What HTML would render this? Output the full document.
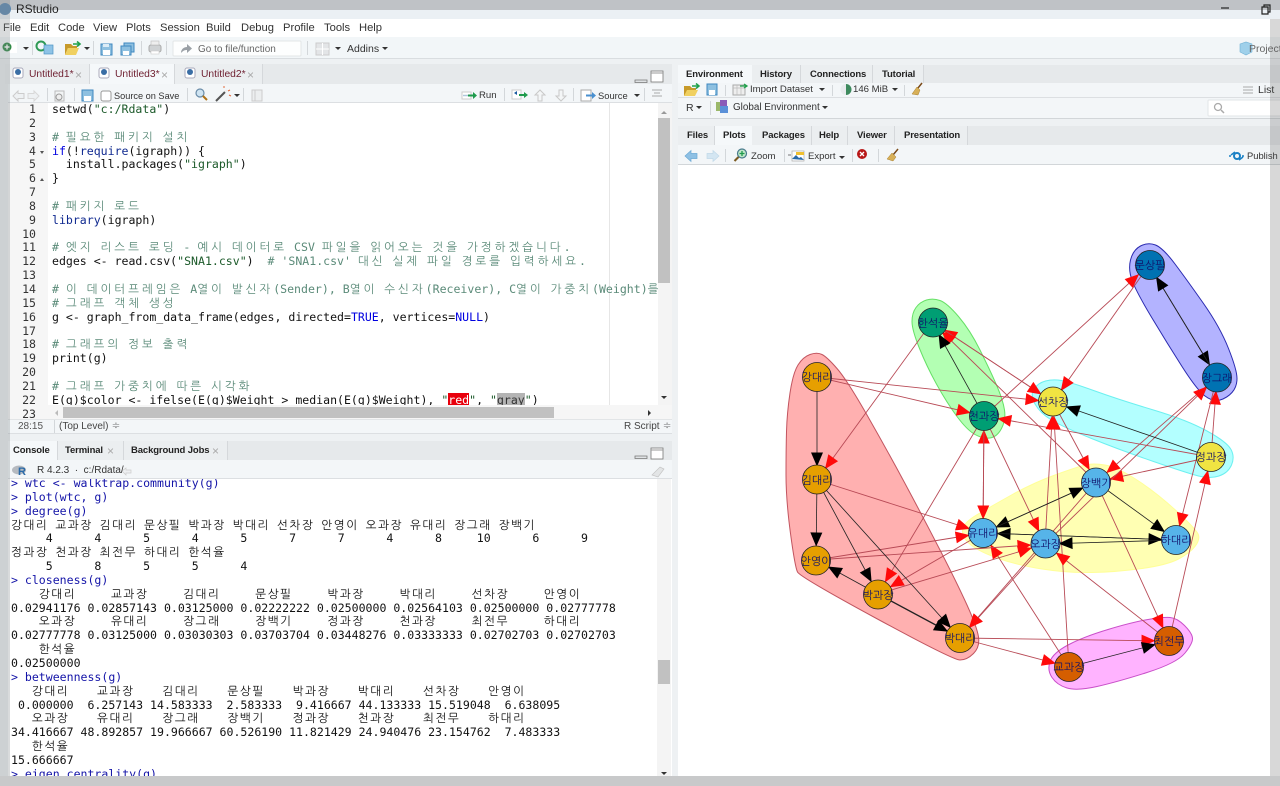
<!DOCTYPE html>
<html lang="ko"><head><meta charset="utf-8"><title>RStudio</title>
<style>
html,body{margin:0;padding:0;width:1280px;height:786px;overflow:hidden;background:#eef1f3}
#w{position:absolute;left:0;top:0;width:1280px;height:786px;overflow:hidden;filter:blur(.3px);font-family:"Liberation Sans","NanumGothic",sans-serif;font-size:10.5px;color:#333}
.a{position:absolute}
.t{position:absolute;white-space:nowrap;line-height:14px}
.b{font-weight:bold;color:#222;font-size:9.5px;letter-spacing:-.12px}
.n{font-size:9.6px}
.x{color:#aaa;font-size:12px}
.s{position:absolute;width:1px;background:#d3d7da}
.d{position:absolute;width:0;height:0;border-left:3px solid transparent;border-right:3px solid transparent;border-top:3px solid #333}
.c{position:absolute;font-family:"DejaVu Sans Mono","Liberation Mono",monospace;font-size:11.55px;color:#111}
.c div{height:13.85px;line-height:13.85px;white-space:pre}
.c i{font-style:normal;font-family:"NanumGothic","Noto Sans CJK KR",sans-serif}
.src i{letter-spacing:2.95px}
.con i{letter-spacing:1.6px}
.m{color:#5a8a78}.k{color:#0000e0}.f{color:#102a90}.q{color:#1c5a2a}
.con .p{color:#1414a8}
svg{position:absolute;overflow:visible}
svg text{font-family:"NanumGothic","Noto Sans CJK KR",sans-serif;font-size:11px;fill:#10106a;text-anchor:middle}
</style></head><body><div id="w">

<!-- window chrome -->
<div class="a" style="left:0;top:0;width:1280px;height:10px;background:#bfc2c6"></div>
<div class="a" style="left:0;top:10px;width:1280px;height:9px;background:#ebf0f4"></div>
<div class="a" style="left:0;top:19px;width:1280px;height:18px;background:#fff"></div>
<div class="a" style="left:0;top:37px;width:1280px;height:21px;background:#f2f6f8;border-bottom:1px solid #d9dde0"></div>
<div class="t" style="left:16px;top:2px;font-size:12px;color:#222">RStudio</div>
<div class="t" style="left:3px;top:21px;font-size:11.2px">File</div>
<div class="t" style="left:30px;top:21px;font-size:11.2px">Edit</div>
<div class="t" style="left:58px;top:21px;font-size:11.2px">Code</div>
<div class="t" style="left:93px;top:21px;font-size:11.2px">View</div>
<div class="t" style="left:126px;top:21px;font-size:11.2px">Plots</div>
<div class="t" style="left:160px;top:21px;font-size:11.2px">Session</div>
<div class="t" style="left:206px;top:21px;font-size:11.2px">Build</div>
<div class="t" style="left:241px;top:21px;font-size:11.2px">Debug</div>
<div class="t" style="left:283px;top:21px;font-size:11.2px">Profile</div>
<div class="t" style="left:324px;top:21px;font-size:11.2px">Tools</div>
<div class="t" style="left:359px;top:21px;font-size:11.2px">Help</div>

<!-- main toolbar -->
<svg style="left:0;top:0" width="1280" height="60">
 <circle cx="5" cy="9" r="6" fill="#5b87b0"/>
 <path d="M1221 8h8" stroke="#222" stroke-width="1.2"/>
 <path d="M1262 7h6v7h-6zM1264 7V5h6v7h-2" fill="none" stroke="#222" stroke-width="1.2"/>
 <rect x="9" y="42" width="8" height="11" fill="#fff"/>
 <circle cx="7" cy="47" r="4.5" fill="#2f8a45"/><path d="M4.5 47h5M7 44.5v5" stroke="#fff" stroke-width="1.4"/>
 <circle cx="41" cy="46" r="4.5" fill="none" stroke="#2f9a55" stroke-width="2"/>
 <rect x="44" y="45" width="9" height="9" fill="#8ec3e6" stroke="#4d94c4" stroke-width=".7"/>
 <path d="M65 44h6l2 2h4v2H68l-3 7z" fill="#c79a2a"/><path d="M65 55l3-7h11l-3 7z" fill="#f0d060"/>
 <path d="M73 44h6M77 41.5l3 2.5-3 2.5" stroke="#1fa04a" stroke-width="1.6" fill="none"/>
 <path d="M101 44h11v11h-11z" fill="#8ec0e0" stroke="#3f88c0"/><rect x="103" y="50" width="7" height="5" fill="#fff"/><rect x="103" y="44" width="6" height="3" fill="#dcecf6"/>
 <path d="M124 43h10v9h-10z" fill="#8ec0e0" stroke="#3f88c0"/><path d="M121 46h10v9h-10z" fill="#8ec0e0" stroke="#3f88c0"/><rect x="123" y="51" width="6" height="4" fill="#fff"/>
 <rect x="149" y="45" width="12" height="7" rx="2" fill="#cfd2d4" stroke="#aaa"/><rect x="151" y="41" width="8" height="4" fill="#eee" stroke="#bbb" stroke-width=".6"/><rect x="151" y="51" width="8" height="3" fill="#fff" stroke="#ccc" stroke-width=".6"/>
 <rect x="173" y="41" width="128" height="15" fill="#fdfefe" stroke="#e2e5e7" rx="1"/>
 <path d="M181 53c0-4 3-6 6-6v-3l5 4.5-5 4.5v-3c-3 0-4 1-6 3z" fill="#9aa0a6"/>
 <path d="M316 43h13v12h-13z" fill="#e3e5e7" stroke="#ccc"/><path d="M316 49h13M322.5 43v12" stroke="#fff"/>
 <path d="M1240 44l6-2 6 2v8l-6 3-6-3z" fill="#9fd0ea" stroke="#70b0d4" stroke-width=".6"/>
</svg>
<div class="d" style="left:23px;top:47px"></div><div class="s" style="left:32px;top:41px;height:14px"></div>
<div class="d" style="left:84px;top:47px"></div><div class="s" style="left:93px;top:41px;height:14px"></div>
<div class="s" style="left:141px;top:41px;height:14px"></div><div class="s" style="left:166px;top:41px;height:14px"></div>
<div class="s" style="left:307px;top:41px;height:14px"></div><div class="d" style="left:335px;top:47px"></div>
<div class="t" style="left:198px;top:43px;color:#666;font-size:10px">Go to file/function</div>
<div class="t" style="left:347px;top:42px;font-size:10.5px">Addins</div><div class="d" style="left:382px;top:47px"></div>
<div class="t" style="left:1249px;top:42px;color:#666;font-size:10.5px">Project:</div>

<!-- source pane -->
<div class="a" style="left:8px;top:64px;width:664px;height:20px;background:#e6e9eb"></div>
<div class="a" style="left:8px;top:84px;width:664px;height:19px;background:#f3f6f8;border-bottom:1px solid #dcdfe2;box-sizing:border-box"></div>
<div class="a" style="left:5px;top:64px;width:85px;height:20px;background:#ebeef0;border-right:1px solid #d5d8db;box-sizing:border-box"></div>
<div class="a" style="left:90px;top:64px;width:85px;height:20px;background:#f5f8fa;border-right:1px solid #d5d8db;box-sizing:border-box"></div>
<div class="a" style="left:175px;top:64px;width:88px;height:20px;background:#ebeef0;border-right:1px solid #d5d8db;box-sizing:border-box"></div>
<svg style="left:0;top:60px" width="280" height="30">
 <rect x="13" y="8" width="10" height="10" rx="2" fill="#fff" stroke="#aab"/><circle cx="18" cy="12" r="3" fill="#3a6ea5"/>
 <rect x="99" y="8" width="10" height="10" rx="2" fill="#fff" stroke="#aab"/><circle cx="104" cy="12" r="3" fill="#3a6ea5"/>
 <rect x="185" y="8" width="10" height="10" rx="2" fill="#fff" stroke="#aab"/><circle cx="190" cy="12" r="3" fill="#3a6ea5"/>
</svg>
<div class="t" style="left:29px;top:68px;color:#6e1f30;font-size:10.3px">Untitled1*</div><div class="t x" style="left:75px;top:68px">×</div>
<div class="t" style="left:115px;top:68px;color:#6e1f30;font-size:10.3px">Untitled3*</div><div class="t x" style="left:161px;top:68px">×</div>
<div class="t" style="left:201px;top:68px;color:#6e1f30;font-size:10.3px">Untitled2*</div><div class="t x" style="left:247px;top:68px">×</div>
<svg style="left:0;top:60px" width="680" height="45">
 <path d="M635 20h12v2.5h-12z" fill="#dfe2e4" stroke="#777" stroke-width=".8"/><rect x="651" y="11" width="12" height="11" fill="#fff" stroke="#777" stroke-width=".8"/><path d="M651 13h12" stroke="#999"/>
 <path d="M13 36l5-5v2.5h6v5h-6v2.5z" fill="#eef1f3" stroke="#ccc"/><path d="M39 36l-5-5v2.5h-6v5h6v2.5z" fill="#eef1f3" stroke="#d8d8d8"/>
 <rect x="55" y="31" width="9" height="10" fill="#f2f4f5" stroke="#bbb"/><circle cx="59" cy="37" r="3" fill="#eee" stroke="#999"/>
 <path d="M82 30h11v11h-11z" fill="#8ec0e0" stroke="#3f88c0"/><rect x="84" y="36" width="7" height="5" fill="#fff"/>
 <rect x="101" y="31" width="10" height="10" rx="2" fill="#fff" stroke="#999"/>
 <circle cx="200" cy="33" r="4" fill="#cfe4f2" stroke="#6a8ca8" stroke-width="1.2"/><path d="M203 36l4 4" stroke="#b0741a" stroke-width="2"/>
 <path d="M216 41l9-9" stroke="#555" stroke-width="2"/><path d="M225 32l2-2" stroke="#eee" stroke-width="2"/><path d="M228 31l2-1M224 28v-2M229 35l2 1" stroke="#e36a3a"/>
 <rect x="252" y="30" width="10" height="11" fill="#eceeef" stroke="#ccc"/><path d="M255 30v11" stroke="#ccc"/>
 <rect x="462" y="32" width="9" height="7" fill="#fff" stroke="#ccc"/><path d="M463 35.5h11" stroke="#b0c8dc" stroke-width="1.5"/><path d="M468 35.5h6" stroke="#1e9a4c" stroke-width="2"/><path d="M473 32l4 3.5-4 3.5z" fill="#1e9a4c"/>
 <rect x="512" y="30" width="9" height="9" fill="#fff" stroke="#ccc"/><path d="M514 33l3-2v4z" fill="#1a5aa0"/><path d="M519 35h6" stroke="#1e9a4c" stroke-width="2"/><path d="M524 32l4 3-4 3z" fill="#1e9a4c"/>
 <path d="M540 30l5 5h-3v6h-4v-6h-3z" fill="#f4f6f7" stroke="#c8c8c8"/><path d="M561 41l5-5h-3v-6h-4v6h-3z" fill="#f4f6f7" stroke="#c8c8c8"/>
 <rect x="581" y="30" width="10" height="11" fill="#fff" stroke="#aaa"/><path d="M586 35.5h7" stroke="#4a90d0" stroke-width="2"/><path d="M592 32l4 3.5-4 3.5z" fill="#4a90d0"/>
 <path d="M652 30h10M654 33h6M652 36h10" stroke="#aaa"/>
</svg>
<div class="s" style="left:47px;top:88px;height:13px"></div><div class="s" style="left:74px;top:88px;height:13px"></div><div class="s" style="left:187px;top:88px;height:13px"></div><div class="s" style="left:243px;top:88px;height:13px"></div>
<div class="s" style="left:504px;top:88px;height:13px"></div><div class="s" style="left:573px;top:88px;height:13px"></div><div class="s" style="left:644px;top:88px;height:13px"></div>
<div class="t" style="left:114px;top:88.5px;font-size:9.2px">Source on Save</div>
<div class="d" style="left:234px;top:94px"></div>
<div class="t n" style="left:479px;top:88.5px">Run</div>
<div class="t n" style="left:598px;top:88.5px;font-size:9.4px">Source</div><div class="d" style="left:634px;top:94px"></div>

<!-- editor -->
<div class="a" style="left:8px;top:103px;width:664px;height:316px;background:#fff"></div>
<div class="a" style="left:8px;top:103px;width:40px;height:316px;background:#f6f6f6"></div>
<div class="a" style="left:609px;top:103px;width:1px;height:302px;background:#e6e6e6"></div>
<div class="a" style="left:658px;top:103px;width:14px;height:302px;background:#f4f4f4"></div>
<div class="a" style="left:658px;top:118px;width:12px;height:165px;background:#c1c1c1"></div>
<div class="a" style="left:48px;top:405px;width:624px;height:14px;background:#f6f6f6"></div>
<div class="a" style="left:63px;top:407px;width:491px;height:11px;background:#c1c1c1"></div>
<div class="a" style="left:8px;top:405px;width:40px;height:14px;background:#f6f6f6"></div>
<div class="a" style="left:661px;top:111px;width:0;height:0;border-left:3px solid transparent;border-right:3px solid transparent;border-bottom:3px solid #999"></div>
<div class="a" style="left:661px;top:396px;width:0;height:0;border-left:3px solid transparent;border-right:3px solid transparent;border-top:3px solid #333"></div>
<div class="a" style="left:55px;top:410px;width:0;height:0;border-top:3px solid transparent;border-bottom:3px solid transparent;border-right:3px solid #bbb"></div>
<div class="a" style="left:648px;top:410px;width:0;height:0;border-top:3px solid transparent;border-bottom:3px solid transparent;border-left:3px solid #333"></div>
<div class="c" style="left:8px;top:103px;width:28px;text-align:right;color:#333;height:317px;overflow:hidden"><div>1</div><div>2</div><div>3</div><div>4</div><div>5</div><div>6</div><div>7</div><div>8</div><div>9</div><div>10</div><div>11</div><div>12</div><div>13</div><div>14</div><div>15</div><div>16</div><div>17</div><div>18</div><div>19</div><div>20</div><div>21</div><div>22</div><div>23</div></div>
<div class="a" style="left:40px;top:151px;width:0;height:0;border-left:2.5px solid transparent;border-right:2.5px solid transparent;border-top:3px solid #555"></div>
<div class="a" style="left:40px;top:178px;width:0;height:0;border-left:2.5px solid transparent;border-right:2.5px solid transparent;border-bottom:3px solid #555"></div>
<div class="c src" style="left:52px;top:103px;width:606px;height:302px;overflow:hidden">
<div>setwd(<span class="q">"c:/Rdata"</span>)</div>
<div></div>
<div class="m"># <i>필요한</i> <i>패키지</i> <i>설치</i></div>
<div><span class="k">if</span>(!<span class="f">require</span>(igraph)) {</div>
<div>  install.packages(<span class="q">"igraph"</span>)</div>
<div>}</div>
<div></div>
<div class="m"># <i>패키지</i> <i>로드</i></div>
<div><span class="f">library</span>(igraph)</div>
<div></div>
<div class="m"># <i>엣지</i> <i>리스트</i> <i>로딩</i> - <i>예시</i> <i>데이터로</i> CSV <i>파일을</i> <i>읽어오는</i> <i>것을</i> <i>가정하겠습니다</i>.</div>
<div>edges &lt;- read.csv(<span class="q">"SNA1.csv"</span>)  <span class="m"># 'SNA1.csv' <i>대신</i> <i>실제</i> <i>파일</i> <i>경로를</i> <i>입력하세요</i>.</span></div>
<div></div>
<div class="m"># <i>이</i> <i>데이터프레임은</i> A<i>열이</i> <i>발신자</i>(Sender), B<i>열이</i> <i>수신자</i>(Receiver), C<i>열이</i> <i>가중치</i>(Weight)<i>를</i></div>
<div class="m"># <i>그래프</i> <i>객체</i> <i>생성</i></div>
<div>g &lt;- graph_from_data_frame(edges, directed=<span class="k">TRUE</span>, vertices=<span class="k">NULL</span>)</div>
<div></div>
<div class="m"># <i>그래프의</i> <i>정보</i> <i>출력</i></div>
<div>print(g)</div>
<div></div>
<div class="m"># <i>그래프</i> <i>가중치에</i> <i>따른</i> <i>시각화</i></div>
<div>E(g)$color &lt;- ifelse(E(g)$Weight &gt; median(E(g)$Weight), <span class="q">"<span style="background:#e8000c;color:#fff">red</span>"</span>, <span class="q">"<span style="background:#b4b4b4;color:#333">gray</span>"</span>)</div>
</div>
<div class="a" style="left:8px;top:419px;width:664px;height:15px;background:#f3f6f8;border-top:1px solid #e2e5e7;border-bottom:1px solid #dcdfe2;box-sizing:border-box"></div>
<div class="s" style="left:54px;top:420px;height:13px"></div>
<div class="t" style="left:18px;top:420px;font-size:10px;color:#555">28:15</div>
<div class="t" style="left:59px;top:420px;font-size:10px;color:#444">(Top Level) ≑</div>
<div class="t" style="left:624px;top:420px;font-size:10px;color:#444">R Script ≑</div>

<!-- console -->
<div class="a" style="left:8px;top:441px;width:664px;height:19px;background:#e6e9eb"></div>
<div class="a" style="left:8px;top:441px;width:49px;height:19px;background:#f5f8fa"></div>
<div class="a" style="left:57px;top:441px;width:67px;height:19px;background:#ebeef0;border-left:1px solid #d5d8db;border-right:1px solid #d5d8db;box-sizing:border-box"></div>
<div class="a" style="left:124px;top:441px;width:104px;height:19px;background:#ebeef0;border-right:1px solid #d5d8db;box-sizing:border-box"></div>
<div class="t b" style="left:13px;top:444px">Console</div>
<div class="t b" style="left:65px;top:444px">Terminal</div><div class="t x" style="left:107px;top:444px">×</div>
<div class="t b" style="left:131px;top:444px">Background Jobs</div><div class="t x" style="left:212px;top:444px">×</div>
<div class="a" style="left:8px;top:460px;width:664px;height:19px;background:#f3f6f8;border-bottom:1px solid #dcdfe2;box-sizing:border-box"></div>
<svg style="left:0;top:440px" width="680" height="40">
 <path d="M635 16h12v2.5h-12z" fill="#dfe2e4" stroke="#777" stroke-width=".8"/><rect x="651" y="8" width="12" height="11" fill="#fff" stroke="#777" stroke-width=".8"/><path d="M651 10h12" stroke="#999"/>
 <ellipse cx="19" cy="30" rx="7" ry="4.5" fill="#b5bac0"/>
 <text x="22" y="35" style="font-family:'Liberation Sans';font-weight:bold;font-size:11px;fill:#2a6aa8">R</text>
 <path d="M122 31l4-3v2h5v3h-5v2z" fill="#eef0f2" stroke="#ccc" stroke-width=".7"/>
 <path d="M652 35l8-8 4 2-6 8z" fill="#e3e5e6" stroke="#c4c4c4" stroke-width=".7"/>
</svg>
<div class="t" style="left:37px;top:464px;font-size:10px;color:#333">R 4.2.3 &nbsp;· &nbsp;c:/Rdata/</div>
<div class="a" style="left:8px;top:479px;width:664px;height:297px;background:#fff"></div>
<div class="a" style="left:657px;top:479px;width:14px;height:297px;background:#f4f4f4"></div>
<div class="a" style="left:658px;top:660px;width:12px;height:24px;background:#c1c1c1"></div>
<div class="a" style="left:661px;top:772px;width:0;height:0;border-left:3px solid transparent;border-right:3px solid transparent;border-top:3px solid #333"></div>
<div class="a" style="left:8px;top:479px;width:648px;height:297px;overflow:hidden">
<div class="c con" style="left:3px;top:-2px">
<div class="p">&gt; wtc &lt;- walktrap.community(g)</div>
<div class="p">&gt; plot(wtc, g)</div>
<div class="p">&gt; degree(g)</div>
<div><i>강대리</i> <i>교과장</i> <i>김대리</i> <i>문상필</i> <i>박과장</i> <i>박대리</i> <i>선차장</i> <i>안영이</i> <i>오과장</i> <i>유대리</i> <i>장그래</i> <i>장백기</i></div>
<div>     4      4      5      4      5      7      7      4      8     10      6      9</div>
<div><i>정과장</i> <i>천과장</i> <i>최전무</i> <i>하대리</i> <i>한석율</i></div>
<div>     5      8      5      5      4</div>
<div class="p">&gt; closeness(g)</div>
<div>    <i>강대리</i>     <i>교과장</i>     <i>김대리</i>     <i>문상필</i>     <i>박과장</i>     <i>박대리</i>     <i>선차장</i>     <i>안영이</i></div>
<div>0.02941176 0.02857143 0.03125000 0.02222222 0.02500000 0.02564103 0.02500000 0.02777778</div>
<div>    <i>오과장</i>     <i>유대리</i>     <i>장그래</i>     <i>장백기</i>     <i>정과장</i>     <i>천과장</i>     <i>최전무</i>     <i>하대리</i></div>
<div>0.02777778 0.03125000 0.03030303 0.03703704 0.03448276 0.03333333 0.02702703 0.02702703</div>
<div>    <i>한석율</i></div>
<div>0.02500000</div>
<div class="p">&gt; betweenness(g)</div>
<div>   <i>강대리</i>    <i>교과장</i>    <i>김대리</i>    <i>문상필</i>    <i>박과장</i>    <i>박대리</i>    <i>선차장</i>    <i>안영이</i></div>
<div> 0.000000  6.257143 14.583333  2.583333  9.416667 44.133333 15.519048  6.638095</div>
<div>   <i>오과장</i>    <i>유대리</i>    <i>장그래</i>    <i>장백기</i>    <i>정과장</i>    <i>천과장</i>    <i>최전무</i>    <i>하대리</i></div>
<div>34.416667 48.892857 19.966667 60.526190 11.821429 24.940476 23.154762  7.483333</div>
<div>   <i>한석율</i></div>
<div>15.666667</div>
<div class="p">&gt; eigen_centrality(g)</div>
</div></div>

<!-- environment pane -->
<div class="a" style="left:678px;top:65px;width:602px;height:18px;background:#e6e9eb"></div>
<div class="a" style="left:678px;top:65px;width:74px;height:18px;background:#f5f8fa"></div>
<div class="a" style="left:752px;top:65px;width:49px;height:18px;background:#ebeef0;border-right:1px solid #d5d8db;box-sizing:border-box"></div>
<div class="a" style="left:801px;top:65px;width:72px;height:18px;background:#ebeef0;border-right:1px solid #d5d8db;box-sizing:border-box"></div>
<div class="a" style="left:873px;top:65px;width:51px;height:18px;background:#ebeef0;border-right:1px solid #d5d8db;box-sizing:border-box"></div>
<div class="t b" style="left:686px;top:68px">Environment</div><div class="t b" style="left:760px;top:68px">History</div><div class="t b" style="left:810px;top:68px">Connections</div><div class="t b" style="left:882px;top:68px">Tutorial</div>
<div class="a" style="left:678px;top:83px;width:602px;height:15px;background:#f3f6f8;border-bottom:1px solid #dcdfe2;box-sizing:border-box"></div>
<div class="a" style="left:678px;top:98px;width:602px;height:21px;background:#f3f6f8;border-bottom:1px solid #d2d6d9;box-sizing:border-box"></div>
<svg style="left:670px;top:80px" width="610" height="40">
 <path d="M14 6h6l2 2h4v2H18l-4 6z" fill="#c79a2a"/><path d="M14 16l3-6h11l-3 6z" fill="#f0d060"/><path d="M22 6h6M26 3.5l3 2.5-3 2.5" stroke="#1fa04a" stroke-width="1.5" fill="none"/>
 <path d="M37 4h10v11h-10z" fill="#8ec0e0" stroke="#3f88c0"/><rect x="39" y="10" width="6" height="5" fill="#fff"/>
 <rect x="63" y="5" width="12" height="10" fill="#eee" stroke="#aaa"/><path d="M63 8h12M67 5v10M71 5v10" stroke="#bbb" stroke-width=".7"/><path d="M70 6h6M74 4l3 2-3 2" stroke="#1fa04a" stroke-width="1.3" fill="none"/>
 <path d="M176 4a5.5 5.5 0 0 1 0 11z" fill="#3e8a5e"/><path d="M176 4a5.5 5.5 0 0 0 0 11z" fill="#e8ebed"/>
 <path d="M252 3l-4 5" stroke="#7a4a18" stroke-width="1.5"/><path d="M247 7l3 3-2 5-6-1z" fill="#d8b058" stroke="#a88030" stroke-width=".5"/>
 <rect x="46" y="22" width="9" height="9" fill="#9bb86a"/><rect x="50" y="20" width="7" height="8" fill="#8a5ab8"/><rect x="50" y="26" width="8" height="7" fill="#5a90d8"/>
 <path d="M573 7h10M573 10h10M573 13h10" stroke="#aaa"/>
 <rect x="538" y="20" width="80" height="16" rx="1" fill="#fff" stroke="#e2e5e7"/>
 <circle cx="548" cy="27" r="3.5" fill="none" stroke="#aaa" stroke-width="1.3"/><path d="M551 30l3 3" stroke="#aaa" stroke-width="1.5"/>
</svg>
<div class="s" style="left:725px;top:85px;height:11px"></div><div class="s" style="left:832px;top:85px;height:11px"></div><div class="s" style="left:904px;top:85px;height:11px"></div><div class="s" style="left:710px;top:101px;height:14px"></div>
<div class="t n" style="left:750px;top:82.5px">Import Dataset</div><div class="d" style="left:819px;top:88px"></div>
<div class="t n" style="left:853px;top:82.5px">146 MiB</div><div class="d" style="left:892px;top:88px"></div>
<div class="t" style="left:1258px;top:82.5px;font-size:10.5px">List</div>
<div class="t" style="left:686px;top:101px;font-size:10.5px">R</div><div class="d" style="left:696px;top:106px"></div>
<div class="t" style="left:733px;top:101px;font-size:9.9px">Global Environment</div><div class="d" style="left:822px;top:106px"></div>

<!-- plots pane -->
<div class="a" style="left:678px;top:126px;width:602px;height:19px;background:#e6e9eb"></div>
<div class="a" style="left:678px;top:126px;width:37px;height:19px;background:#ebeef0;border-right:1px solid #d5d8db;box-sizing:border-box"></div>
<div class="a" style="left:715px;top:126px;width:37px;height:19px;background:#f5f8fa"></div>
<div class="a" style="left:752px;top:126px;width:60px;height:19px;background:#ebeef0;border-right:1px solid #d5d8db;box-sizing:border-box"></div>
<div class="a" style="left:812px;top:126px;width:36px;height:19px;background:#ebeef0;border-right:1px solid #d5d8db;box-sizing:border-box"></div>
<div class="a" style="left:848px;top:126px;width:47px;height:19px;background:#ebeef0;border-right:1px solid #d5d8db;box-sizing:border-box"></div>
<div class="a" style="left:895px;top:126px;width:73px;height:19px;background:#ebeef0;border-right:1px solid #d5d8db;box-sizing:border-box"></div>
<div class="t b" style="left:687px;top:129px">Files</div><div class="t b" style="left:723px;top:129px">Plots</div><div class="t b" style="left:762px;top:129px">Packages</div><div class="t b" style="left:819px;top:129px">Help</div><div class="t b" style="left:857px;top:129px">Viewer</div><div class="t b" style="left:904px;top:129px">Presentation</div>
<div class="a" style="left:678px;top:145px;width:602px;height:20px;background:#f3f6f8;border-bottom:1px solid #d2d6d9;box-sizing:border-box"></div>
<div class="a" style="left:678px;top:165px;width:602px;height:611px;background:#fff"></div>
<svg style="left:670px;top:140px" width="610" height="30">
 <path d="M15 16l6-5.5v3h6v5h-6v3z" fill="#8ec0e4" stroke="#6aa8d4" stroke-width=".7"/>
 <path d="M49 16l-6-5.5v3h-6v5h6v3z" fill="#d4e6f2" stroke="#c0d8e8" stroke-width=".7"/>
 <circle cx="72" cy="13.5" r="4.5" fill="#bfe6c8" stroke="#487a8c" stroke-width="1.2"/><path d="M72 11v5M69.5 13.5h5" stroke="#1e9a4c" stroke-width="1.3"/><path d="M68.5 17l-4 4" stroke="#7a5a20" stroke-width="2"/>
 <rect x="122" y="11" width="12" height="10" fill="#fff" stroke="#aaa" stroke-width=".7"/><path d="M122 19l4-4 3 3 2-1 3 3z" fill="#2a6aa8"/><rect x="126" y="12" width="8" height="3" fill="#f0c030"/><path d="M118 15h3" stroke="#777"/>
 <circle cx="192" cy="14" r="5" fill="#b81818"/><path d="M190 12l4 4M194 12l-4 4" stroke="#fff" stroke-width="1.3"/>
 <path d="M228 9l-5 6" stroke="#7a4a18" stroke-width="1.5"/><path d="M222 13l4 4-3 4-6-2z" fill="#d8b058" stroke="#a88030" stroke-width=".5"/>
 <circle cx="567" cy="16" r="3" fill="none" stroke="#1a80c4" stroke-width="2"/><path d="M561 15l4-3M573 17l-4 3M559 16h2M572 16h2" stroke="#1a80c4" stroke-width="1.5"/>
</svg>
<div class="s" style="left:725px;top:149px;height:13px"></div><div class="s" style="left:784px;top:149px;height:13px"></div><div class="s" style="left:852px;top:149px;height:13px"></div><div class="s" style="left:878px;top:149px;height:13px"></div>
<div class="t" style="left:751px;top:150px;font-size:9.6px">Zoom</div><div class="t" style="left:808px;top:150px;font-size:9.5px">Export</div><div class="d" style="left:839px;top:156px"></div>
<div class="t" style="left:1247px;top:149px;font-size:9.4px">Publish</div>

<!-- network graph -->
<svg style="left:0;top:0" width="1280" height="786">
<defs>
<marker id="r" markerUnits="userSpaceOnUse" markerWidth="28" markerHeight="14" refX="27.5" refY="7" orient="auto" overflow="visible"><path d="M0 1L14 7 0 13z" fill="#ff0a0a"/></marker>
<marker id="k" markerUnits="userSpaceOnUse" markerWidth="28" markerHeight="14" refX="27.5" refY="7" orient="auto" overflow="visible"><path d="M0 1L14 7 0 13z" fill="#000"/></marker>
</defs>
<!-- hulls -->
<path d="M810 354.5Q817 352 822 354.5Q827 357 837 368.5Q847 380 867 415Q887 450 905 483.5Q923 517 940 550Q957 583 967 605Q977 627 978.5 637Q980 647 973.5 653.5Q967 660 960 660Q953 660 876.5 618.5Q800 577 797.5 572Q795 567 790.5 533.5Q786 500 786 475Q786 450 786.5 431.5Q787 413 790 393Q793 373 798 365Q803 357 810 354.5Z" fill="#ffb0b0" stroke="#c25560"/>
<path d="M926.5 300Q933 298 940 300.5Q947 303 958.5 316.5Q970 330 980 350Q990 370 996.5 385Q1003 400 1004.5 410Q1006 420 1001.5 428.5Q997 437 990 438Q983 439 975 434.5Q967 430 957 416.5Q947 403 937 385Q927 367 919.5 348.5Q912 330 912 321.5Q912 313 916 307.5Q920 302 926.5 300Z" fill="#b3ffb3" stroke="#66e066"/>
<path d="M1140.5 246Q1148 242 1155.5 245Q1163 248 1175 264Q1187 280 1203.5 303.5Q1220 327 1228.5 348.5Q1237 370 1237 378.5Q1237 387 1232 392.5Q1227 398 1220 400Q1213 402 1205 396Q1197 390 1182 366.5Q1167 343 1152 318Q1137 293 1132.5 281.5Q1128 270 1130.5 260Q1133 250 1140.5 246Z" fill="#b3b3ff" stroke="#2a2ab0"/>
<path d="M1045.5 381Q1053 379 1061.5 380.5Q1070 382 1095 391Q1120 400 1153.5 410Q1187 420 1207 431Q1227 442 1231 449.5Q1235 457 1231.5 465Q1228 473 1219 476Q1210 479 1198.5 476Q1187 473 1153.5 461.5Q1120 450 1091.5 438.5Q1063 427 1051.5 420Q1040 413 1035 404Q1030 395 1034 389Q1038 383 1045.5 381Z" fill="#b3ffff" stroke="#6cf0f0"/>
<path d="M1085 465Q1093 463 1105 465Q1117 467 1137 480Q1157 493 1177 511.5Q1197 530 1198.5 535Q1200 540 1195 546.5Q1190 553 1178.5 559Q1167 565 1142 568.5Q1117 572 1092 572.5Q1067 573 1042 569Q1017 565 998.5 558.5Q980 552 971 545Q962 538 962.5 530.5Q963 523 976.5 515Q990 507 1011.5 495Q1033 483 1055 475Q1077 467 1085 465Z" fill="#ffffb3" stroke="#ffff99"/>
<path d="M1148 619.5Q1163 617 1170 617.5Q1177 618 1184.5 625.5Q1192 633 1192.5 638Q1193 643 1185 653Q1177 663 1147 672.5Q1117 682 1097 686.5Q1077 691 1067 688Q1057 685 1052 677.5Q1047 670 1050 661.5Q1053 653 1068 645Q1083 637 1108 629.5Q1133 622 1148 619.5Z" fill="#ffb3ff" stroke="#c94fc9"/>
<!-- red edges -->
<g stroke="#b84a56" stroke-width=".9" fill="none">
<path d="M817 377L1053 402" marker-end="url(#r)"/>
<path d="M817 377L984 416" marker-end="url(#r)"/>
<path d="M932 322L817 480" marker-end="url(#r)"/>
<path d="M1053 402L932 322" marker-end="url(#r)"/>
<path d="M932 322L1053 402" marker-end="url(#r)"/>
<path d="M1096 482L932 322" marker-end="url(#r)"/>
<path d="M984 416L1149 265" marker-end="url(#r)"/>
<path d="M1149 265L1053 402" marker-end="url(#r)"/>
<path d="M1053 402L1096 482" marker-end="url(#r)"/>
<path d="M1211 457L984 416" marker-end="url(#r)"/>
<path d="M1211 457L1096 482" marker-end="url(#r)"/>
<path d="M1217 377L1096 482" marker-end="url(#r)"/>
<path d="M1045 544L1217 377" marker-end="url(#r)"/>
<path d="M1211 457L1217 377" marker-end="url(#r)"/>
<path d="M1169 641L1211 457" marker-end="url(#r)"/>
<path d="M1217 377L1176 540" marker-end="url(#r)"/>
<path d="M983 533L984 416" marker-end="url(#r)"/>
<path d="M984 416L983 533" marker-end="url(#r)"/>
<path d="M984 416L1045 544" marker-end="url(#r)"/>
<path d="M984 416L878 594" marker-end="url(#r)"/>
<path d="M1045 544L1053 402" marker-end="url(#r)"/>
<path d="M1069 667L1053 402" marker-end="url(#r)"/>
<path d="M1096 482L1169 641" marker-end="url(#r)"/>
<path d="M1169 641L1045 544" marker-end="url(#r)"/>
<path d="M1069 667L983 533" marker-end="url(#r)"/>
<path d="M960 638L1069 667" marker-end="url(#r)"/>
<path d="M960 638L1169 641" marker-end="url(#r)"/>
<path d="M1045 544L960 638" marker-end="url(#r)"/>
<path d="M1096 482L960 638" marker-end="url(#r)"/>
<path d="M816 560L983 533" marker-end="url(#r)"/>
<path d="M817 480L983 533" marker-end="url(#r)"/>
<path d="M816 560L1045 544" marker-end="url(#r)"/>
<path d="M878 594L1045 544" marker-end="url(#r)"/>
<path d="M983 533L878 594" marker-end="url(#r)"/>
</g>
<!-- black edges -->
<g stroke="#222" stroke-width=".8" fill="none">
<path d="M817 377L817 480" marker-end="url(#k)"/>
<path d="M817 480L816 560" marker-end="url(#k)"/>
<path d="M817 480L878 594" marker-end="url(#k)"/>
<path d="M817 480L960 638" marker-end="url(#k)"/>
<path d="M878 594L816 560" marker-end="url(#k)"/>
<path d="M878 594L960 638" marker-end="url(#k)" stroke-width="1.4"/>
<path d="M984 416L932 322" marker-end="url(#k)"/>
<path d="M1149 265L1217 377" marker-end="url(#k)"/>
<path d="M1217 377L1149 265" marker-end="url(#k)"/>
<path d="M1211 457L1053 402" marker-end="url(#k)"/>
<path d="M1096 482L983 533" marker-end="url(#k)"/>
<path d="M983 533L1096 482" marker-end="url(#k)"/>
<path d="M1096 482L1176 540" marker-end="url(#k)"/>
<path d="M1176 540L983 533" marker-end="url(#k)"/>
<path d="M983 533L1176 540" marker-end="url(#k)"/>
<path d="M1176 540L1045 544" marker-end="url(#k)"/>
<path d="M1069 667L1169 641" marker-end="url(#k)"/>
</g>
<!-- nodes -->
<g stroke="#222" stroke-width=".8">
<g fill="#e69f00"><circle cx="817" cy="377" r="14.5"/><circle cx="817" cy="479.5" r="14.5"/><circle cx="816" cy="560.5" r="14.5"/><circle cx="878" cy="594.5" r="14.5"/><circle cx="960" cy="638" r="14.5"/></g>
<g fill="#009e73"><circle cx="933" cy="322.5" r="14.5"/><circle cx="984" cy="416" r="14.5"/></g>
<g fill="#f0e442"><circle cx="1053" cy="401.5" r="14.5"/><circle cx="1211" cy="457" r="14.5"/></g>
<g fill="#0072b2"><circle cx="1150" cy="265" r="14.5"/><circle cx="1217" cy="377.5" r="14.5"/></g>
<g fill="#56b4e9"><circle cx="1096" cy="482.5" r="14.5"/><circle cx="983" cy="533" r="14.5"/><circle cx="1045.5" cy="543.5" r="14.5"/><circle cx="1176" cy="540" r="14.5"/></g>
<g fill="#d55e00"><circle cx="1069" cy="667" r="14.5"/><circle cx="1169" cy="641" r="14.5"/></g>
</g>
<text x="817" y="381">강대리</text><text x="817" y="484">김대리</text><text x="816" y="565">안영이</text><text x="878" y="599">박과장</text><text x="960" y="642">박대리</text>
<text x="933" y="327">한석율</text><text x="984" y="420">천과장</text><text x="1053" y="406">선차장</text><text x="1211" y="461">정과장</text>
<text x="1150" y="269">문상필</text><text x="1217" y="382">장그래</text><text x="1096" y="487">장백기</text><text x="983" y="537">유대리</text><text x="1045.5" y="548">오과장</text><text x="1176" y="544">하대리</text>
<text x="1069" y="671">교과장</text><text x="1169" y="645">최전무</text>
</svg>

<!-- screenshot frame overlays -->
<div class="a" style="left:0;top:0;width:10px;height:786px;background:rgba(130,135,140,.3)"></div>
<div class="a" style="left:1270px;top:19px;width:10px;height:767px;background:rgba(90,90,90,.24)"></div>
<div class="a" style="left:0;top:776px;width:1280px;height:10px;background:#c8c9ca"></div>
</div></body></html>
